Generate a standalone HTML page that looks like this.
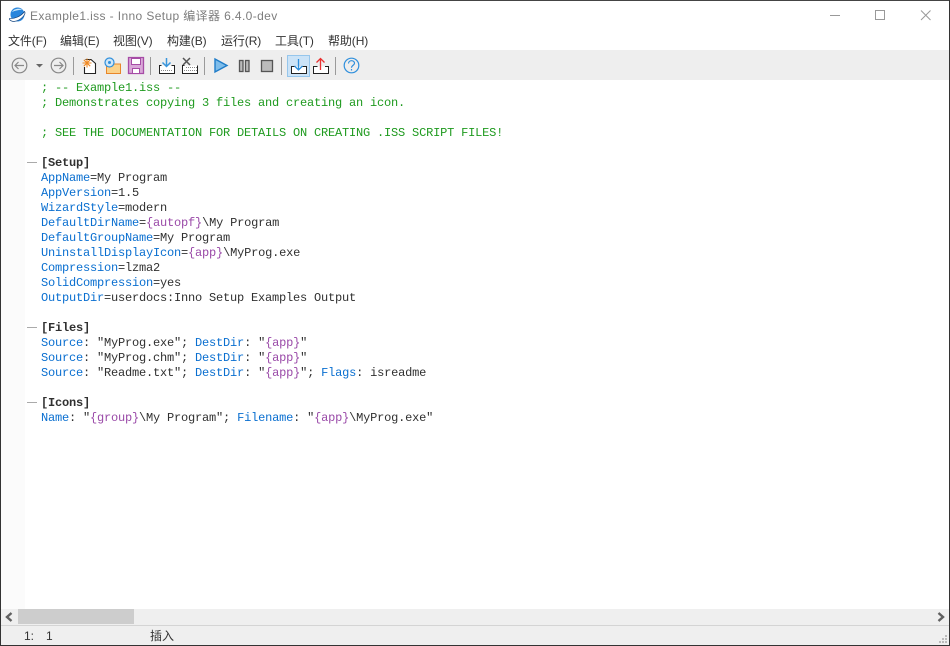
<!DOCTYPE html>
<html><head><meta charset="utf-8"><style>
html,body{margin:0;padding:0;background:#fff}
body{width:950px;height:646px;position:relative;overflow:hidden;font-family:"Liberation Sans","Noto Sans CJK SC",sans-serif}
.abs{position:absolute}
#title{left:30px;top:8px;font-size:12px;line-height:16px;color:#7d7d7d;white-space:pre;letter-spacing:.38px}
.m{position:absolute;top:33px;font-size:12px;line-height:16px;color:#333;white-space:pre;letter-spacing:-.1px}
#tb{left:1px;top:50px;width:948px;height:30px;background:#eeeeee}
#gut{left:1px;top:80px;width:24px;height:530px;background:#fbfbfb}
#code{left:41px;top:81px;margin:0;font:12px/15px "Liberation Mono",monospace;letter-spacing:-.2px;color:#303030;white-space:pre}
.c{color:#1f9a1f}.k{color:#0a6fd0}.p{color:#9a4aa8}b{font-weight:bold}
</style></head><body>
<div class="abs" style="left:0;top:0;width:950px;height:1px;background:#444"></div>
<div class="abs" style="left:0;top:0;width:1px;height:646px;background:#333"></div>
<div class="abs" style="left:949px;top:0;width:1px;height:646px;background:#333"></div>
<div class="abs" style="left:0;top:645px;width:950px;height:1px;background:#333"></div>

<svg class="abs" style="left:9px;top:7px" width="18" height="17" viewBox="0 0 18 17"><circle cx="8.500" cy="7.500" r="7" fill="#2a86dc"/><path d="M3 5C5 1.500 10 1 13.500 2.500C10 3 6 3.500 3 5Z" fill="#cfeafa"/><path d="M.5 11.500C5 12 12 9.500 15.500 4.500C17.500 7 12 13.500 5 14.500C2.500 14.500 0 13 .5 11.500Z" fill="#fff" stroke="#15457f" stroke-width=".7"/></svg>
<div id="title" class="abs">Example1.iss - Inno Setup 编译器 6.4.0-dev</div>
<svg class="abs" style="left:825px;top:6px" width="115" height="20"><path d="M5 9.500H15" stroke="#999" fill="none"/><rect x="50.500" y="4.500" width="9" height="9" fill="none" stroke="#999"/><path d="M96 4.500L105.500 14M105.500 4.500L96 14" stroke="#999" fill="none"/></svg>

<div class="m" style="left:8px">文件(F)</div>
<div class="m" style="left:60px">编辑(E)</div>
<div class="m" style="left:113px">视图(V)</div>
<div class="m" style="left:167px">构建(B)</div>
<div class="m" style="left:221px">运行(R)</div>
<div class="m" style="left:275px">工具(T)</div>
<div class="m" style="left:328px">帮助(H)</div>

<div id="tb" class="abs"></div>
<svg class="abs" style="left:0;top:50px" width="370" height="30" fill="none">
<g stroke="#888" stroke-width="1.200"><circle cx="19.500" cy="15.500" r="7.300"/><path d="M24 15.500H15M18.500 12L15 15.500L18.500 19"/><circle cx="58.500" cy="15.500" r="7.300"/><path d="M54 15.500H63M59.500 12L63 15.500L59.500 19"/></g>
<path d="M36 14H43L39.500 17.500Z" fill="#666"/>
<g stroke="#9a9a9a"><path d="M73.500 7V25M150.500 7V25M204.500 7V25M281.500 7V25M335.500 7V25"/></g>
<path d="M85.500 9.500H91L95.500 13.500V23.500H84.500V17" stroke="#222" fill="#fff" stroke-width="1.100"/>
<path d="M87 8.500V17.500M82.500 13H91.500M83.800 9.800L90.200 16.200M90.200 9.800L83.800 16.200" stroke="#f08a24" stroke-width="1.100"/>
<path d="M106.500 15.500H112L114 14H120.500V23.500H106.500Z" fill="#fbd28a" stroke="#e8862a"/>
<circle cx="109.500" cy="12.500" r="4.500" fill="#cfe6f7" stroke="#2f8fdc" stroke-width="1.200"/><circle cx="109.500" cy="12.500" r="1.500" fill="#2f8fdc"/>
<path d="M128.500 7.500H143.500V23.500H128.500Z" fill="#d9a8d8" stroke="#a64ca6" stroke-width="1.300"/>
<rect x="131.500" y="8.500" width="9" height="6" fill="#fff" stroke="#a64ca6"/><rect x="132.500" y="18.500" width="7" height="5" fill="#fff" stroke="#a64ca6"/>
<path d="M161.500 15.500H159.500V23.500H174.500V15.500H171.500" stroke="#222" fill="#fff"/><path d="M161 20.500H173" stroke="#888" stroke-dasharray="1 1"/>
<path d="M166.500 8V16M162.500 12.500L166.500 16.500L170.500 12.500" stroke="#3a96dc" stroke-width="1.500"/>
<path d="M184.500 15.500H182.500V23.500H197.500V15.500" stroke="#222" fill="#fff"/><path d="M184 20.500H197M186 17.500H197" stroke="#888" stroke-dasharray="1 1"/>
<path d="M183 8L190 15M190 8L183 15" stroke="#555" stroke-width="1.500"/>
<path d="M215 9L227 15.500L215 22Z" fill="#7fbdea" stroke="#1f7cc8" stroke-width="1.400"/>
<rect x="239.500" y="10.500" width="3.500" height="11" fill="#bbb" stroke="#555" stroke-width="1.300"/><rect x="245.500" y="10.500" width="3.500" height="11" fill="#bbb" stroke="#555" stroke-width="1.300"/>
<rect x="261.500" y="10.500" width="11" height="11" fill="#bbb" stroke="#555" stroke-width="1.300"/>
<rect x="287.500" y="5.500" width="22" height="21" fill="#cbe3f7" stroke="#96c6ec"/>
<path d="M295.500 16.500H291.500V23.500H306.500V16.500H302.500" stroke="#222" fill="#fff"/>
<path d="M298.500 9V20M294.500 16L298.500 20L302.500 16" stroke="#2f8fdc" stroke-width="1.300"/>
<path d="M317.500 16.500H313.500V23.500H328.500V16.500H325" stroke="#222" fill="#fff"/>
<path d="M320.500 20V8.500M316.500 12.500L320.500 8.500L324.500 12.500" stroke="#e83030" stroke-width="1.300"/>
<circle cx="351.500" cy="15.500" r="7.300" stroke="#2f8fdc" stroke-width="1.200"/>
<path d="M348.500 13.500C348.500 9.800 354.500 9.800 354.500 13.300C354.500 15.300 351.500 15.300 351.500 17.800" stroke="#2f8fdc" stroke-width="1.200"/><path d="M351.500 19V20.500" stroke="#2f8fdc" stroke-width="1.200"/>
</svg>

<div id="gut" class="abs"></div>
<svg class="abs" style="left:0;top:80px" width="41" height="340"><g stroke="#aaa"><path d="M27 82.500H37M27 247.500H37M27 322.500H37"/></g></svg>

<pre id="code" class="abs"><span class="c">; -- Example1.iss --
; Demonstrates copying 3 files and creating an icon.

; SEE THE DOCUMENTATION FOR DETAILS ON CREATING .ISS SCRIPT FILES!</span>

<b>[Setup]</b>
<span class="k">AppName</span>=My Program
<span class="k">AppVersion</span>=1.5
<span class="k">WizardStyle</span>=modern
<span class="k">DefaultDirName</span>=<span class="p">{autopf}</span>\My Program
<span class="k">DefaultGroupName</span>=My Program
<span class="k">UninstallDisplayIcon</span>=<span class="p">{app}</span>\MyProg.exe
<span class="k">Compression</span>=lzma2
<span class="k">SolidCompression</span>=yes
<span class="k">OutputDir</span>=userdocs:Inno Setup Examples Output

<b>[Files]</b>
<span class="k">Source</span>: "MyProg.exe"; <span class="k">DestDir</span>: "<span class="p">{app}</span>"
<span class="k">Source</span>: "MyProg.chm"; <span class="k">DestDir</span>: "<span class="p">{app}</span>"
<span class="k">Source</span>: "Readme.txt"; <span class="k">DestDir</span>: "<span class="p">{app}</span>"; <span class="k">Flags</span>: isreadme

<b>[Icons]</b>
<span class="k">Name</span>: "<span class="p">{group}</span>\My Program"; <span class="k">Filename</span>: "<span class="p">{app}</span>\MyProg.exe"</pre>

<div class="abs" style="left:1px;top:609px;width:948px;height:16px;background:#efefef"></div>
<div class="abs" style="left:18px;top:609px;width:116px;height:15px;background:#cdcdcd"></div>
<svg class="abs" style="left:0;top:609px" width="18" height="16" fill="none"><path d="M11.500 4L7 8L11.500 12" stroke="#606060" stroke-width="2.400"/></svg>
<svg class="abs" style="left:935px;top:609px" width="14" height="16" fill="none"><path d="M3.500 4L8 8L3.500 12" stroke="#606060" stroke-width="2.400"/></svg>
<div class="abs" style="left:1px;top:625px;width:948px;height:20px;background:#efefef;border-top:1px solid #d4d4d4;box-sizing:border-box"></div>
<div class="abs" style="left:24px;top:628px;font-size:12px;line-height:16px;color:#333;white-space:pre">1:</div>
<div class="abs" style="left:46px;top:628px;font-size:12px;line-height:16px;color:#333">1</div>
<div class="abs" style="left:150px;top:628px;font-size:12px;line-height:16px;color:#333">插入</div>
<svg class="abs" style="left:939px;top:634px" width="10" height="11" fill="#bbb"><rect x="6" y="1" width="2" height="2"/><rect x="3" y="4" width="2" height="2"/><rect x="6" y="4" width="2" height="2"/><rect x="0" y="7" width="2" height="2"/><rect x="3" y="7" width="2" height="2"/><rect x="6" y="7" width="2" height="2"/></svg>
</body></html>
